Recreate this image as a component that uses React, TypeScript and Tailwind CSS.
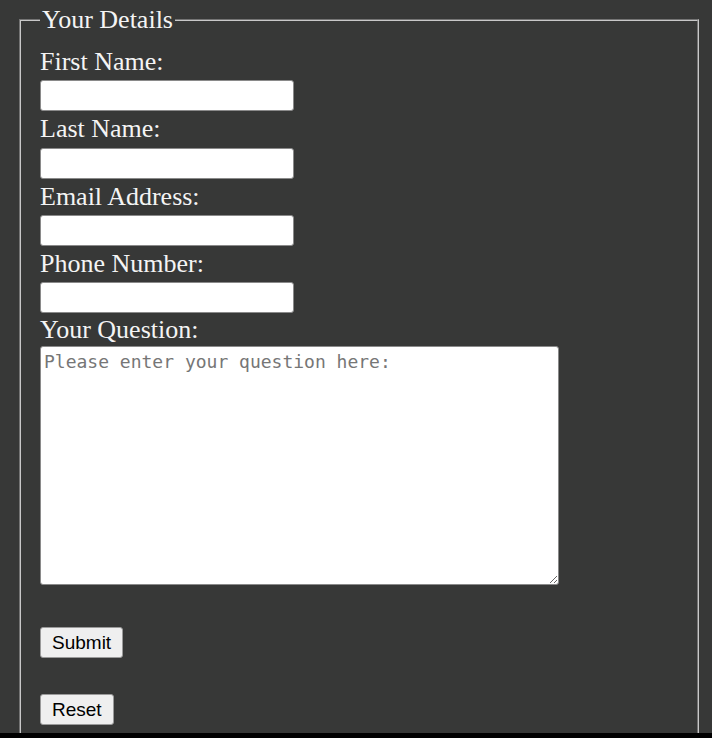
import React from "react";

const labelCls =
  "block text-[26px] leading-[36.33px] text-[#f4f4f4] [font-family:'Liberation_Serif','Times_New_Roman',serif]";
const inputCls =
  "block w-[254px] h-[31px] bg-white border border-[#8a8a8a] rounded-[3px] px-1";
const btnCls =
  "block h-[31px] px-[11px] bg-[#efefef] border border-[#9a9a9a] rounded-[3px] text-[19px] text-black [font-family:'Liberation_Sans',Arial,sans-serif] leading-none";

export default function App() {
  return (
    <div className="w-[712px] h-[738px] bg-black overflow-hidden">
      <div className="h-[733px] bg-[#373837] overflow-hidden pl-[19px] pt-[4px] pr-[14px]">
        <fieldset
          className="w-[680px] h-[760px] border-2 border-[#c8c8c8] px-[19px] pt-[8px]"
          style={{ borderStyle: "groove" }}
        >
          <legend className="px-[2px] text-[26px] leading-[32px] text-[#f4f4f4] [font-family:'Liberation_Serif','Times_New_Roman',serif]">
            Your Details
          </legend>
          <label className={labelCls}>First Name:</label>
          <input type="text" className={inputCls} />
          <label className={labelCls}>Last Name:</label>
          <input type="text" className={inputCls} />
          <label className={labelCls}>Email Address:</label>
          <input type="text" className={inputCls} />
          <label className={labelCls}>Phone Number:</label>
          <input type="text" className={inputCls} />
          <label className="block text-[26px] leading-[33px] text-[#f4f4f4] [font-family:'Liberation_Serif','Times_New_Roman',serif]">
            Your Question:
          </label>
          <textarea
            className="block w-[519px] h-[239px] bg-white border border-[#8a8a8a] rounded-[3px] px-[3px] pt-[4px] text-[18px] leading-[22px] [font-family:'DejaVu_Sans_Mono','Liberation_Mono',monospace] placeholder:text-[#767676] resize"
            placeholder="Please enter your question here:"
          />
          <button type="button" className={`${btnCls} mt-[42px]`}>
            Submit
          </button>
          <button type="button" className={`${btnCls} mt-[36px]`}>
            Reset
          </button>
        </fieldset>
      </div>
    </div>
  );
}
